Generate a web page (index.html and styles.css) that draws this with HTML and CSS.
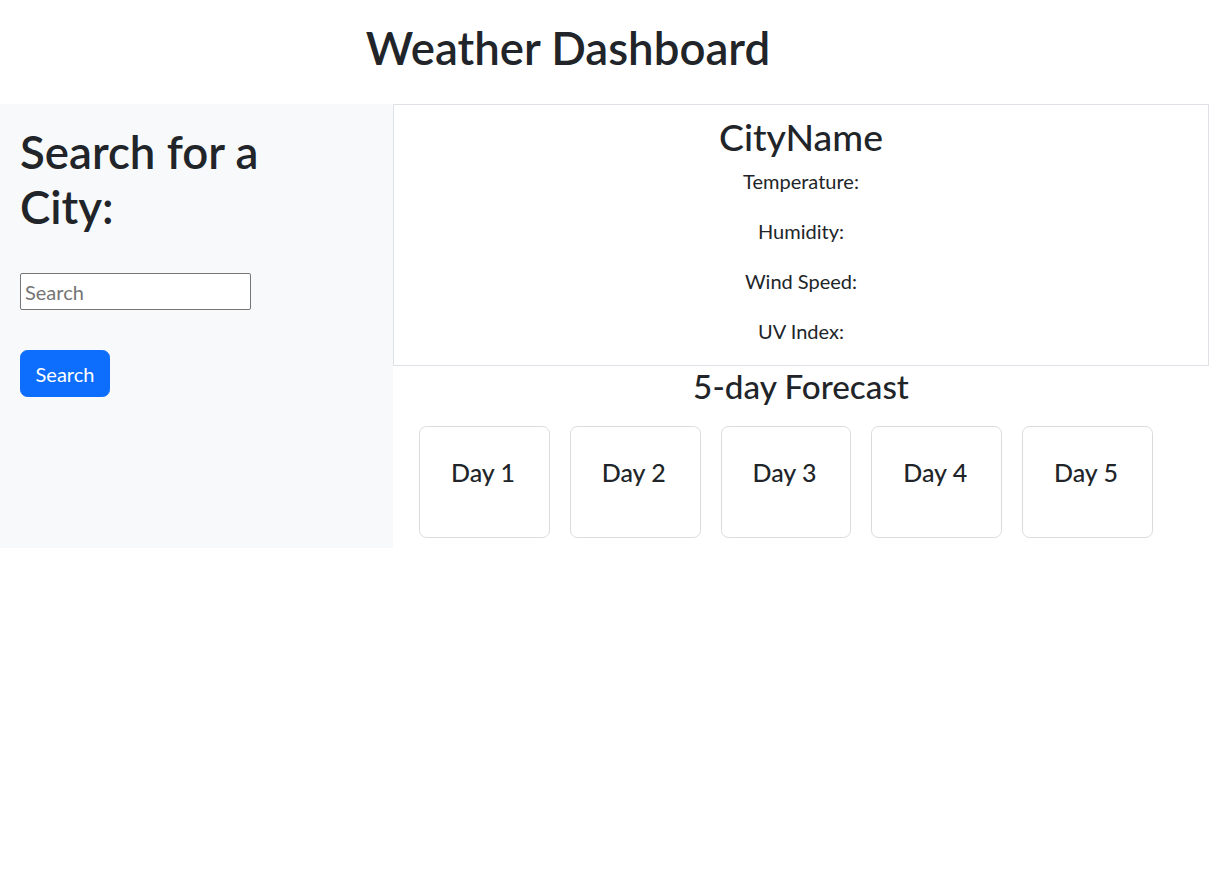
FILE: index.html
```html
<!DOCTYPE html>
<html lang="en">
<head>
<meta charset="utf-8">
<title>Weather Dashboard</title>
<link rel="stylesheet" href="styles.css">
</head>
<body>
  <header class="page-header">
    <h1 class="title">Weather Dashboard</h1>
  </header>
  <main class="layout">
    <aside class="sidebar">
      <h1 class="sidebar-title">Search for a City:</h1>
      <input class="search-input" type="text" placeholder="Search">
      <button class="search-btn" type="button">Search</button>
    </aside>
    <section class="content">
      <div class="current-card">
        <h2 class="city-name">CityName</h2>
        <p class="stat">Temperature:</p>
        <p class="stat">Humidity:</p>
        <p class="stat">Wind Speed:</p>
        <p class="stat">UV Index:</p>
      </div>
      <h3 class="forecast-title">5-day Forecast</h3>
      <div class="forecast-row">
        <div class="day-card"><h5 class="day-label">Day 1</h5></div>
        <div class="day-card"><h5 class="day-label">Day 2</h5></div>
        <div class="day-card"><h5 class="day-label">Day 3</h5></div>
        <div class="day-card"><h5 class="day-label">Day 4</h5></div>
        <div class="day-card"><h5 class="day-label">Day 5</h5></div>
      </div>
    </section>
  </main>
</body>
</html>
```

FILE: styles.css
```css
* { box-sizing: border-box; }

body {
  margin: 0;
  font-family: Lato, "Noto Sans", sans-serif;
  font-size: 20px;
  line-height: 1.5;
  color: #212529;
  background: #fff;
}

h1, h2, h3, h5, p { margin: 0; font-weight: 500; }

.page-header {
  height: 104px;
  padding-top: 21px;
  padding-right: 73px;
  text-align: center;
}

.title {
  font-size: 45.6px;
  line-height: 1.2;
  font-weight: 600;
}

.layout {
  display: flex;
  align-items: stretch;
}

.sidebar {
  width: 393px;
  flex: 0 0 393px;
  background: #f8f9fa;
  padding: 21px 20px 20px 20px;
  display: flex;
  flex-direction: column;
  align-items: flex-start;
}

.sidebar-title {
  font-size: 45.6px;
  line-height: 1.2;
  font-weight: 600;
  width: 300px;
}

.search-input {
  margin-top: 39px;
  width: 231px;
  height: 37px;
  border: 1px solid #767676;
  border-radius: 2px;
  padding: 1px 4px 0 4px;
  font-family: inherit;
  font-size: 20px;
  color: #212529;
  background: #fff;
}

.search-input::placeholder { color: #757575; }

.search-btn {
  margin-top: 40px;
  width: 90px;
  height: 47px;
  background: #0d6efd;
  color: #fff;
  border: 1px solid #0d6efd;
  border-radius: 7.5px;
  font-family: inherit;
  font-size: 20px;
  line-height: 1.5;
  padding: 0;
}

.content {
  flex: 1;
  display: flex;
  flex-direction: column;
}

.current-card {
  border: 1px solid #dee2e6;
  padding-top: 10px;
  text-align: center;
  height: 262px;
}

.city-name {
  font-size: 37.4px;
  line-height: 1.2;
  margin-bottom: 6px;
}

.stat {
  font-size: 20px;
  font-weight: 400;
  line-height: 30px;
  margin-bottom: 20px;
}

.forecast-title {
  text-align: center;
  font-size: 33.25px;
  line-height: 40px;
}

.forecast-row {
  display: flex;
  gap: 20px;
  padding-left: 26px;
  margin-top: 20px;
  margin-bottom: 10px;
}

.day-card {
  width: 130.75px;
  height: 112px;
  border: 1px solid #d9dcdf;
  border-radius: 7.5px;
  padding: 30px 0 0 31px;
}

.day-label {
  font-size: 25px;
  line-height: 30px;
}
```
